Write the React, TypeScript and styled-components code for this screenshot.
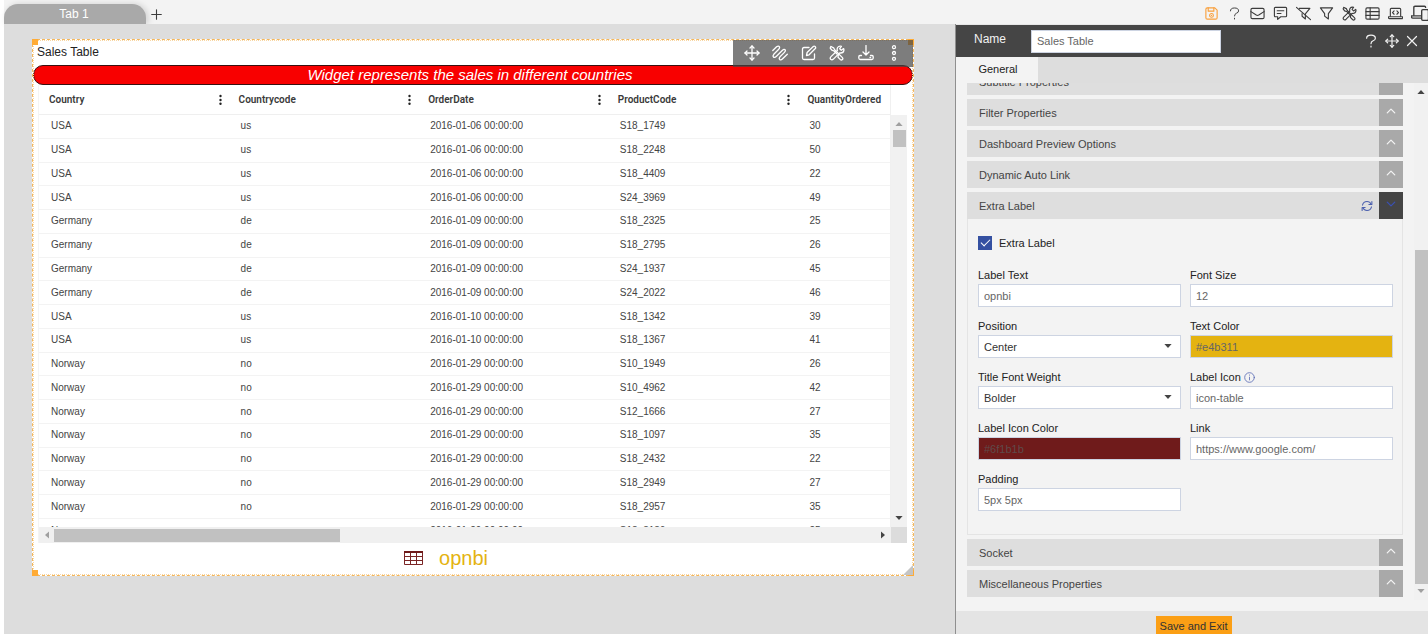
import React, { useState } from "react";
import styled, { createGlobalStyle, css } from "styled-components";

const GlobalStyle = createGlobalStyle`
  *, *::before, *::after { box-sizing: border-box; }
  body {
    margin: 0;
    background: #fff;
    font-family: "Liberation Sans", Arial, sans-serif;
    font-size: 11px;
    color: #222;
  }
  button, input, select { font: inherit; }
`;

const Page = styled.div`
  display: flex;
  flex-direction: column;
  height: 100vh;
  overflow: hidden;
  padding-left: 4px;
`;

const TopBar = styled.header`
  display: flex;
  align-items: flex-end;
  justify-content: space-between;
  flex: 0 0 24px;
  background: #f3f3f3;
`;

const Tabs = styled.nav`
  display: flex;
  align-items: flex-end;
`;

const PageTab = styled.button`
  width: 142px;
  height: 20px;
  padding: 0 2px 0 0;
  border: 0;
  border-radius: 14px 14px 0 0;
  background: #a9a9a9;
  color: #fff;
  font-size: 12px;
  line-height: 20px;
  box-shadow: 2px 0 6px rgba(0, 0, 0, 0.15);
`;

const IconButton = styled.button<{ $w?: number; $h?: number; $tone?: string }>`
  display: flex;
  align-items: center;
  justify-content: center;
  flex: none;
  width: ${(p) => p.$w ?? 20}px;
  height: ${(p) => p.$h ?? 20}px;
  padding: 0;
  border: 0;
  background: none;
  color: ${(p) => p.$tone ?? "#3c3c3c"};
  cursor: pointer;
`;

const Tools = styled.div`
  display: flex;
  align-items: center;
  height: 22px;
  margin-right: -4px;
`;

const Main = styled.div`
  display: flex;
  flex: 1;
  min-height: 0;
`;

const Canvas = styled.main`
  flex: 1;
  min-width: 0;
  padding: 15px 41px 0 28px;
  background: #ddd;
`;

const Widget = styled.section`
  position: relative;
  display: flex;
  flex-direction: column;
  height: 537px;
  border: 1px dashed #f4b65a;
  outline: 1px dotted #f8d7a4;
  outline-offset: -2px;
  background: #fff;
`;

const Handle = styled.span<{ $corner: "tl" | "tr" | "bl" | "br" }>`
  position: absolute;
  width: 6px;
  height: 6px;
  background: #ffab35;
  ${(p) => (p.$corner[0] === "t" ? "top: -1px;" : "bottom: -1px;")}
  ${(p) => (p.$corner[1] === "l" ? "left: -1px;" : "right: -1px;")}
`;

const ResizeGrip = styled.svg`
  position: absolute;
  right: 0;
  bottom: 0;
`;

const WidgetTitle = styled.h1`
  margin: 0;
  padding: 0 4px;
  font-size: 12px;
  font-weight: 400;
  line-height: 25px;
  color: #222;
`;

const WidgetTools = styled.div`
  position: absolute;
  top: 0;
  right: 0;
  display: flex;
  align-items: center;
  justify-content: space-between;
  width: 180px;
  height: 27px;
  padding: 0 10px 2px;
  background: rgba(70, 70, 70, 0.7);
`;

const Banner = styled.h2`
  margin: 0;
  height: 20px;
  padding-right: 6px;
  border: 1px solid #3a1010;
  border-radius: 10px;
  background: #f80000;
  color: #fff;
  font-size: 15px;
  font-style: italic;
  font-weight: 400;
  line-height: 17px;
  text-align: center;
`;

const GridFrame = styled.div`
  display: grid;
  grid-template-columns: minmax(0, 1fr) 16px;
  grid-template-rows: 442px 16px;
  margin: 0 6px 0 5px;
  border-left: 1px solid #f4f4f4;
`;

const GridView = styled.div`
  overflow: hidden;
  border-right: 1px solid #f0f0f0;
`;

const Grid = styled.table`
  width: 948px;
  height: 458px;
  table-layout: fixed;
  border-collapse: separate;
  border-spacing: 0;
`;

const HeadCell = styled.th`
  height: 30px;
  padding: 0 5px 0 10px;
  border-bottom: 1px solid #efefef;
  font-family: Roboto, sans-serif;
  font-size: 10px;
  font-weight: 600;
  line-height: 14px;
  text-align: left;
  color: #3a3a3a;
`;

const HeadInner = styled.div`
  display: flex;
  align-items: center;
  justify-content: space-between;
`;

const Cell = styled.td`
  padding: 0 12px;
  border-bottom: 1px solid #f3f3f3;
  font-size: 10px;
  line-height: 14px;
  color: #444;
`;

const VScroll = styled.div<{ $top?: number }>`
  display: flex;
  flex-direction: column;
  align-items: center;
  margin-top: ${(p) => p.$top ?? 0}px;
  padding: 7px 0;
  background: #f1f1f1;
`;

const HScroll = styled.div`
  display: flex;
  align-items: center;
  padding: 0 6px;
  background: #f0f0f0;
`;

const HThumb = styled.span`
  width: 34%;
  height: 13px;
  margin: 0 auto 0 5px;
  background: #c1c1c1;
`;

const VThumb = styled.span<{ $h: number; $mt: number }>`
  flex: none;
  width: 13px;
  height: ${(p) => p.$h}px;
  margin: ${(p) => p.$mt}px 0 auto;
  background: #c1c1c1;
`;

const Corner = styled.div`
  background: #dcdcdc;
`;

const ExtraLink = styled.a`
  display: flex;
  align-items: center;
  justify-content: center;
  gap: 16px;
  height: 30px;
  padding-right: 54px;
  color: #e4b311;
  font-size: 20px;
  line-height: 24px;
  text-decoration: none;
`;

const Panel = styled.aside`
  display: flex;
  flex-direction: column;
  flex: 0 0 473px;
  min-width: 0;
  border-left: 1px solid #8f8f8f;
  background: #f3f3f3;
`;

const PanelHead = styled.div`
  display: flex;
  align-items: center;
  flex: 0 0 33px;
  padding: 0 7px 0 18px;
  border-top: 1px solid #e6e6e6;
  background: #454545;
  color: #f2f2f2;
`;

const NameLabel = styled.label`
  width: 57px;
  padding-bottom: 4px;
  font-size: 12px;
`;

const control = css`
  display: block;
  width: 100%;
  height: 23px;
  padding: 0 5px;
  border: 1px solid #cdd4e2;
  border-radius: 0;
  background: #fff;
  font-size: 11px;
  outline: 0;
`;

const TextInput = styled.input<{ $bg?: string; $ink?: string }>`
  ${control}
  background: ${(p) => p.$bg ?? "#fff"};
  color: ${(p) => p.$ink ?? "#666"};
`;

const NameInput = styled(TextInput)`
  width: 190px;
  margin-right: auto;
`;

const PanelTabs = styled.div`
  display: flex;
  flex: 0 0 26px;
  background: #ddd;
`;

const PanelTab = styled.button`
  width: 82px;
  padding: 0 0 2px 2px;
  border: 0;
  background: #f3f3f3;
  color: #222;
`;

const Scroller = styled.div`
  display: flex;
  flex: 1;
  min-height: 0;
  overflow: hidden;
`;

const Sections = styled.div`
  display: flex;
  flex-direction: column;
  gap: 4px;
  flex: 1;
  min-width: 0;
  margin-top: -15px;
  padding: 0 11px;
`;

const SectionHead = styled.div`
  display: flex;
  align-items: center;
  height: 27px;
  padding-left: 12px;
  background: #dedede;
  color: #444;
`;

const SectionName = styled.span`
  flex: 1;
`;

const Toggle = styled.button<{ $open?: boolean }>`
  display: flex;
  align-items: center;
  justify-content: center;
  width: 24px;
  height: 27px;
  padding: 0 0 3px;
  border: 0;
  background: ${(p) => (p.$open ? "#454545" : "#a9a9a9")};
  color: ${(p) => (p.$open ? "#3a50b4" : "#f4f4f4")};
`;

const SectionBody = styled.div`
  padding: 17px 9px 23px 10px;
  border: 1px solid #e4e4e4;
  border-top: 0;
`;

const CheckLabel = styled.label`
  display: flex;
  align-items: center;
  gap: 7px;
  height: 14px;
  margin-bottom: 18px;
`;

const Check = styled.input`
  appearance: none;
  width: 14px;
  height: 14px;
  margin: 0;
  background: #3450a1;
  display: grid;
  place-items: center;
  &:checked::before {
    content: "";
    width: 9px;
    height: 5px;
    margin-bottom: 3px;
    border: solid #fff;
    border-width: 0 0 1px 1px;
    transform: rotate(-45deg);
  }
`;

const Fields = styled.div`
  display: grid;
  grid-template-columns: 1fr 1fr;
  gap: 12px 9px;
`;

const Field = styled.div`
  display: flex;
  flex-direction: column;
  gap: 2px;
`;

const FieldLabel = styled.label`
  display: flex;
  align-items: center;
  gap: 3px;
  height: 14px;
  line-height: 14px;
`;

const SelectWrap = styled.div`
  position: relative;
  svg {
    position: absolute;
    right: 9px;
    top: 9px;
    pointer-events: none;
  }
`;

const Select = styled.select`
  ${control}
  appearance: none;
  color: #333;
`;

const Footer = styled.footer`
  display: flex;
  justify-content: center;
  align-items: flex-start;
  flex: 0 0 23px;
  padding: 5px 0 0 3px;
  overflow: hidden;
  background: #e4e4e4;
`;

const SaveButton = styled.button`
  width: 76px;
  height: 22px;
  padding: 0 0 2px;
  border: 0;
  background: #fb9f15;
  color: #333;
  font-size: 11px;
  white-space: nowrap;
`;

type IconName =
  | "save" | "help" | "mail" | "note" | "filterOff" | "filter" | "tools" | "list" | "code" | "devices"
  | "move" | "link" | "edit" | "download" | "more" | "close" | "refresh" | "plus" | "info" | "up" | "down";

const shapes: Record<IconName, React.ReactNode> = {
  save: (
    <>
      <path d="M2 3.5Q2 2 3.5 2h8L14 4.5v8q0 1.5-1.5 1.5h-9Q2 14 2 12.5z" />
      <path d="M4.5 2v3.5h6V2" />
      <circle cx="8" cy="10" r="2" />
      <path d="M8 10v.1" />
    </>
  ),
  help: (
    <>
      <path d="M3 4.8Q3 1.2 8 1.2t5 3.6Q13 6.8 10.400 7.700 8 8.600 8 11" />
      <path d="M8 13.8v1" />
    </>
  ),
  mail: (
    <>
      <rect x="1" y="2.5" width="14" height="11" rx="1.5" />
      <path d="M1 6l5.700 3.700q1.300.8 2.600 0L15 6" />
    </>
  ),
  note: (
    <>
      <path d="M2.500 1.500h11q1 0 1 1v8q0 1-1 1H8.200L5 14.300v-2.800H2.500q-1 0-1-1v-8q0-1 1-1z" />
      <path d="M4.500 5h7M4.500 8h4" />
    </>
  ),
  filterOff: (
    <>
      <path d="M3.500 2.500h11.300L10 8.500v5.300L6.500 11V8" />
      <path d="M.5 1.500l15 13" />
    </>
  ),
  filter: <path d="M1.500 2h13L10 8.200v5.600l-4-3V8.200z" />,
  tools: (
    <>
      <path d="M2 1.500l2.600 1.300 1 2 7.600 7.600q1.200 1.300.2 2.200t-2.200-.2L9 12.200 9.300 9.800" />
      <path d="M2 1.500L1.200 3l1.600 2.200 2 .6 3.200 3.200" />
      <path d="M14.600 3.600l-2.300 1.700-1.600-1.600L12.400 1.300q-2.700-.5-3.800 1.200-.8 1.400-.2 3L2 11.600q-1.400 1.500-.3 2.700 1.200 1.200 2.700-.2l6.300-6.200q3.600.6 4.200-2.600.1-1-.3-1.700z" />
    </>
  ),
  list: (
    <>
      <rect x="1" y="2" width="14" height="12" rx="1.2" />
      <path d="M1 6h14M1 10h14M5.500 2v12" />
    </>
  ),
  code: (
    <>
      <path d="M2.500 11V3.500q0-1 1-1h9q1 0 1 1V11" />
      <path d="M.5 11.500h15v1q0 1-1 1h-13q-1 0-1-1z" />
      <path d="M6.500 5.200L4.800 7l1.700 1.800M9.500 5.200L11.200 7 9.500 8.800" />
    </>
  ),
  devices: (
    <>
      <path d="M2.500 10V3q0-1 1-1H12q1 0 1 1" />
      <path d="M9 10.500H.5v1q0 1 1 1H9" />
      <rect x="9.500" y="5" width="6" height="9.500" rx="1" />
    </>
  ),
  move: (
    <>
      <path d="M8 1v14M1 8h14" />
      <path d="M6 3l2-2 2 2M6 13l2 2 2-2M3 6L1 8l2 2M13 6l2 2-2 2" />
    </>
  ),
  link: (
    <path d="M.8 5.500L4.600 1.800Q6.600.3 7.400 1.800 8 3 6.500 4.500L1.800 9.300Q.4 11.200 1.600 12.200 2.800 13 4.500 11.300L10.500 5.200Q12.300 3.600 13.200 4.900 13.800 6 12.200 7.600L8 11.800Q6.600 13.500 7.800 14.600 9 15.400 10.600 13.800L15.300 9.300" />
  ),
  edit: (
    <>
      <path d="M8 2.500H3q-1.500 0-1.500 1.500v9q0 1.500 1.500 1.500h9q1.500 0 1.500-1.500V9" />
      <path d="M5.500 10.500l.6-3 6.200-6q.9-.8 1.900.1.900 1 .1 1.900l-6.200 6.300z" />
    </>
  ),
  download: (
    <>
      <path d="M8 .5v9M5 7l3 3 3-3" />
      <path d="M3.500 10.500H2q-1.200.1-1.200 1.300V13q0 1.500 1.500 1.500h11.400q1.500 0 1.500-1.500v-1.200q0-1.200-1.200-1.300h-1.500" />
      <path d="M12 12.500h.6" />
    </>
  ),
  more: (
    <>
      <circle cx="8" cy="2.200" r="1.500" />
      <circle cx="8" cy="8" r="1.500" />
      <circle cx="8" cy="13.800" r="1.500" />
    </>
  ),
  close: <path d="M2 2l12 12M14 2L2 14" />,
  refresh: (
    <>
      <path d="M2 6.800Q3.200 2 8 2q3.800 0 5.600 3.600M14 9.200Q12.800 14 8 14q-3.800 0-5.600-3.600" />
      <path d="M14.500 2v4h-4M1.500 14v-4h4" />
    </>
  ),
  plus: <path d="M8 1v14M1 8h14" />,
  info: (
    <>
      <circle cx="8" cy="8" r="7" />
      <path d="M8 7.500v4M8 4.300v.4" />
    </>
  ),
  up: <path d="M2 11l6-6 6 6" />,
  down: <path d="M2 5l6 6 6-6" />,
};

function Icon({ name, size = 16, stroke = 1.2 }: { name: IconName; size?: number; stroke?: number }) {
  return (
    <svg
      width={size}
      height={size}
      viewBox="0 0 16 16"
      fill="none"
      stroke="currentColor"
      strokeWidth={stroke}
      strokeLinecap="round"
      strokeLinejoin="round"
      aria-hidden="true"
    >
      {shapes[name]}
    </svg>
  );
}

const arrows = {
  up: "M0 5L4.500 0 9 5z",
  down: "M0 0L4.500 5 9 0z",
  left: "M5 0L0 4.500 5 9z",
  right: "M0 0L5 4.500 0 9z",
};

function Arrow({ dir, color = "#444" }: { dir: keyof typeof arrows; color?: string }) {
  const tall = dir === "left" || dir === "right";
  return (
    <svg
      width={tall ? 4 : 8}
      height={tall ? 8 : 4}
      viewBox={tall ? "0 0 5 9" : "0 0 9 5"}
      aria-hidden="true"
    >
      <path d={arrows[dir]} fill={color} />
    </svg>
  );
}

function ColumnMenuDots() {
  return (
    <svg width="8" height="11" viewBox="0 0 8 11" fill="#222" aria-hidden="true">
      <circle cx="4.500" cy="2" r="1.200" />
      <circle cx="4.500" cy="6" r="1.200" />
      <circle cx="4.500" cy="9.800" r="1.200" />
    </svg>
  );
}

function TableGlyph() {
  return (
    <svg width="19" height="14" viewBox="0 0 19 14" fill="none" stroke="#7a2525" aria-hidden="true">
      <path d="M.5 1v12.500h18V1M.5 5.500h18M.5 9.500h18M6.500 2v11.500M12.500 2v11.500" />
      <path d="M0 1h19" stroke="#6f1b1b" strokeWidth="2" />
    </svg>
  );
}

const columns = ["Country", "Countrycode", "OrderDate", "ProductCode", "QuantityOrdered"];

const rows: [string, string, string, string, number][] = [
  ["USA", "us", "2016-01-06", "S18_1749", 30],
  ["USA", "us", "2016-01-06", "S18_2248", 50],
  ["USA", "us", "2016-01-06", "S18_4409", 22],
  ["USA", "us", "2016-01-06", "S24_3969", 49],
  ["Germany", "de", "2016-01-09", "S18_2325", 25],
  ["Germany", "de", "2016-01-09", "S18_2795", 26],
  ["Germany", "de", "2016-01-09", "S24_1937", 45],
  ["Germany", "de", "2016-01-09", "S24_2022", 46],
  ["USA", "us", "2016-01-10", "S18_1342", 39],
  ["USA", "us", "2016-01-10", "S18_1367", 41],
  ["Norway", "no", "2016-01-29", "S10_1949", 26],
  ["Norway", "no", "2016-01-29", "S10_4962", 42],
  ["Norway", "no", "2016-01-29", "S12_1666", 27],
  ["Norway", "no", "2016-01-29", "S18_1097", 35],
  ["Norway", "no", "2016-01-29", "S18_2432", 22],
  ["Norway", "no", "2016-01-29", "S18_2949", 27],
  ["Norway", "no", "2016-01-29", "S18_2957", 35],
  ["Norway", "no", "2016-01-29", "S18_3136", 25],
];

const pageTools: [IconName, string][] = [
  ["save", "Save"],
  ["help", "Help"],
  ["mail", "Mail"],
  ["note", "Comments"],
  ["filterOff", "Clear filters"],
  ["filter", "Filter"],
  ["tools", "Settings"],
  ["list", "Data"],
  ["code", "Code"],
  ["devices", "Devices"],
];

const widgetTools: [IconName, string][] = [
  ["move", "Move"],
  ["link", "Link"],
  ["edit", "Edit"],
  ["tools", "Properties"],
  ["download", "Download"],
  ["more", "More"],
];

function Section({ title, open, children }: { title: string; open?: boolean; children?: React.ReactNode }) {
  return (
    <section>
      <SectionHead>
        <SectionName>{title}</SectionName>
        {open && (
          <IconButton $w={24} $tone="#4a5fae" aria-label="Reset section">
            <Icon name="refresh" size={12} stroke={1.4} />
          </IconButton>
        )}
        <Toggle $open={open} aria-expanded={!!open} aria-label={title}>
          <Icon name={open ? "down" : "up"} size={10} stroke={2} />
        </Toggle>
      </SectionHead>
      {children && <SectionBody>{children}</SectionBody>}
    </section>
  );
}

function TextField(props: { id: string; label: string; value: string; bg?: string; ink?: string; info?: boolean }) {
  const [value, setValue] = useState(props.value);
  return (
    <Field>
      <FieldLabel htmlFor={props.id}>
        {props.label}
        {props.info && (
          <IconButton as="span" $w={11} $h={12} $tone="#5a6bb5">
            <Icon name="info" size={11} />
          </IconButton>
        )}
      </FieldLabel>
      <TextInput
        id={props.id}
        $bg={props.bg}
        $ink={props.ink}
        value={value}
        onChange={(e) => setValue(e.target.value)}
      />
    </Field>
  );
}

function SelectField({ id, label, options }: { id: string; label: string; options: string[] }) {
  return (
    <Field>
      <FieldLabel htmlFor={id}>{label}</FieldLabel>
      <SelectWrap>
        <Select id={id} defaultValue={options[0]}>
          {options.map((o) => (
            <option key={o}>{o}</option>
          ))}
        </Select>
        <Arrow dir="down" />
      </SelectWrap>
    </Field>
  );
}

function SalesWidget() {
  return (
    <Widget>
      <WidgetTitle>Sales Table</WidgetTitle>
      <Banner>Widget represents the sales in different countries</Banner>
      <GridFrame>
        <GridView>
          <Grid>
            <thead>
              <tr>
                {columns.map((name) => (
                  <HeadCell key={name} scope="col">
                    <HeadInner>
                      {name}
                      <ColumnMenuDots />
                    </HeadInner>
                  </HeadCell>
                ))}
              </tr>
            </thead>
            <tbody>
              {rows.map(([country, code, date, product, quantity]) => (
                <tr key={product}>
                  <Cell>{country}</Cell>
                  <Cell>{code}</Cell>
                  <Cell>{date} 00:00:00</Cell>
                  <Cell>{product}</Cell>
                  <Cell>{quantity}</Cell>
                </tr>
              ))}
            </tbody>
          </Grid>
        </GridView>
        <VScroll $top={30}>
          <Arrow dir="up" color="#a0a0a0" />
          <VThumb $h={17} $mt={4} />
          <Arrow dir="down" />
        </VScroll>
        <HScroll>
          <Arrow dir="left" color="#a0a0a0" />
          <HThumb />
          <Arrow dir="right" />
        </HScroll>
        <Corner />
      </GridFrame>
      <ExtraLink href="https://www.google.com/">
        <TableGlyph />
        opnbi
      </ExtraLink>
      <Handle $corner="tl" />
      <Handle $corner="tr" />
      <Handle $corner="bl" />
      <Handle $corner="br" />
      <ResizeGrip width="10" height="10" aria-hidden="true">
        <path d="M10 0v10H0z" fill="#c4c4c4" />
      </ResizeGrip>
      <WidgetTools>
        {widgetTools.map(([name, label]) => (
          <IconButton key={name} $w={18} $tone="#fff" aria-label={label}>
            <Icon name={name} stroke={1.3} />
          </IconButton>
        ))}
      </WidgetTools>
    </Widget>
  );
}

function PropertiesPanel() {
  return (
    <Panel>
      <PanelHead>
        <NameLabel htmlFor="widget-name">Name</NameLabel>
        <NameInput id="widget-name" defaultValue="Sales Table" />
        <IconButton $w={20} $tone="#f2f2f2" aria-label="Help">
          <Icon name="help" size={14} stroke={1.4} />
        </IconButton>
        <IconButton $w={22} $tone="#f2f2f2" aria-label="Move panel">
          <Icon name="move" size={14} stroke={1.4} />
        </IconButton>
        <IconButton $w={18} $tone="#f2f2f2" aria-label="Close">
          <Icon name="close" size={12} stroke={1.6} />
        </IconButton>
      </PanelHead>
      <PanelTabs>
        <PanelTab>General</PanelTab>
      </PanelTabs>
      <Scroller>
        <Sections>
          <Section title="Subtitle Properties" />
          <Section title="Filter Properties" />
          <Section title="Dashboard Preview Options" />
          <Section title="Dynamic Auto Link" />
          <Section title="Extra Label" open>
            <CheckLabel>
              <Check type="checkbox" defaultChecked />
              Extra Label
            </CheckLabel>
            <Fields>
              <TextField id="label-text" label="Label Text" value="opnbi" />
              <TextField id="font-size" label="Font Size" value="12" />
              <SelectField id="position" label="Position" options={["Center", "Left", "Right"]} />
              <TextField id="text-color" label="Text Color" value="#e4b311" bg="#e4b311" />
              <SelectField id="weight" label="Title Font Weight" options={["Bolder", "Bold", "Normal"]} />
              <TextField id="label-icon" label="Label Icon" value="icon-table" info />
              <TextField id="icon-color" label="Label Icon Color" value="#6f1b1b" bg="#6f1b1b" ink="#5f4a4a" />
              <TextField id="link" label="Link" value="https://www.google.com/" />
              <TextField id="padding" label="Padding" value="5px 5px" />
            </Fields>
          </Section>
          <Section title="Socket" />
          <Section title="Miscellaneous Properties" />
        </Sections>
        <PanelScroll>
          <Arrow dir="up" />
          <VThumb $h={334} $mt={156} />
          <Arrow dir="down" color="#a0a0a0" />
        </PanelScroll>
      </Scroller>
      <Footer>
        <SaveButton>Save and Exit</SaveButton>
      </Footer>
    </Panel>
  );
}

const PanelScroll = styled(VScroll)`
  flex: 0 0 14px;
  margin-bottom: 11px;
`;

export default function App() {
  return (
    <Page>
      <GlobalStyle />
      <TopBar>
        <Tabs>
          <PageTab>Tab 1</PageTab>
          <IconButton aria-label="Add tab">
            <Icon name="plus" size={11} stroke={1.6} />
          </IconButton>
        </Tabs>
        <Tools>
          {pageTools.map(([name, label]) => (
            <IconButton
              key={name}
              $w={name === "devices" ? 25 : 23}
              $tone={name === "save" ? "#f9a03c" : undefined}
              aria-label={label}
            >
              <Icon name={name} size={name === "devices" ? 18 : name === "help" ? 13 : 15} />
            </IconButton>
          ))}
        </Tools>
      </TopBar>
      <Main>
        <Canvas>
          <SalesWidget />
        </Canvas>
        <PropertiesPanel />
      </Main>
    </Page>
  );
}
